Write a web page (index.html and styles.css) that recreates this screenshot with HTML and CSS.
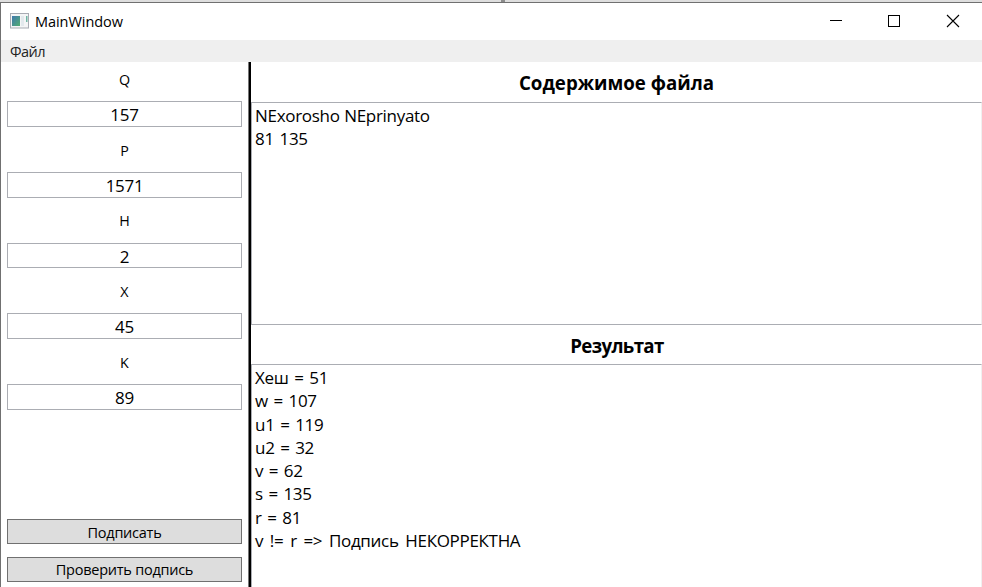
FILE: index.html
```html
<!DOCTYPE html>
<html lang="ru">
<head>
<meta charset="utf-8">
<title>MainWindow</title>
<link rel="stylesheet" href="styles.css">
</head>
<body>
<div class="desktop"><span class="seam"></span></div>
<div class="window">
  <header class="titlebar">
    <svg class="app-icon" width="19" height="16" viewBox="0 0 19 16">
      <defs>
        <linearGradient id="pane" x1="0" y1="0" x2="1" y2="1">
          <stop offset="0" stop-color="#3f78ad"/>
          <stop offset="1" stop-color="#52ad72"/>
        </linearGradient>
      </defs>
      <rect x=".5" y=".5" width="18" height="14.5" fill="#f4f5f6" stroke="#a8abb3"/>
      <rect x="2" y="3" width="8" height="10" fill="url(#pane)"/>
      <rect x="11" y="3" width="3" height="10" fill="#e3e9ed"/>
      <rect x="16" y="3" width="1.5" height="6" fill="#6fb5a4"/>
    </svg>
    <h1 class="title">MainWindow</h1>
    <svg class="controls" width="135" height="14" viewBox="0 0 135 14" fill="none" stroke="#000">
      <path d="M3 6.5h12" shape-rendering="crispEdges"/>
      <rect x="61.5" y="1.5" width="11" height="11" shape-rendering="crispEdges"/>
      <path d="M120 1l12 12M132 1l-12 12" stroke-width="1.1"/>
    </svg>
  </header>
  <nav class="menubar">Файл</nav>
  <main class="content">
    <section class="sidebar">
      <div class="fields">
        <label class="field"><span class="name">Q</span><span class="box">157</span></label>
        <label class="field"><span class="name">P</span><span class="box">1571</span></label>
        <label class="field short"><span class="name">H</span><span class="box">2</span></label>
        <label class="field"><span class="name">X</span><span class="box">45</span></label>
        <label class="field"><span class="name">K</span><span class="box">89</span></label>
      </div>
      <div class="actions">
        <button class="sign">Подписать</button>
        <button class="verify">Проверить подпись</button>
      </div>
    </section>
    <section class="output">
      <h2 class="heading">Содержимое файла</h2>
      <div class="text source"><p class="latin">NExorosho NEprinyato</p><p>81 135</p></div>
      <h2 class="heading result-heading">Результат</h2>
      <div class="text result">
        <p>Хеш = 51</p>
        <p>w = 107</p>
        <p>u1 = 119</p>
        <p>u2 = 32</p>
        <p>v = 62</p>
        <p>s = 135</p>
        <p>r = 81</p>
        <p class="verdict">v != r =&gt; Подпись НЕКОРРЕКТНА</p>
      </div>
    </section>
  </main>
</div>
</body>
</html>
```
FILE: styles.css
```css
* { box-sizing: border-box; margin: 0; padding: 0; }
body {
  width: 982px; height: 587px; overflow: hidden; background: #fff; color: #000;
  font-family: "Open Sans", "Noto Sans", sans-serif; font-size: 14.5px;
}
.desktop { height: 2px; background: #dedede; }
.seam { display: block; width: 4px; height: 2px; margin-left: 501px; background: #8c8c8c; }
.window { height: 585px; display: flex; flex-direction: column; border-top: 1px solid #707070; border-left: 1px solid #707070; }
.titlebar { height: 37px; flex: none; display: flex; align-items: center; padding: 0 20px 0 9px; }
.app-icon { margin-top: -2px; }
.title { margin-left: 6px; font-size: 14.5px; font-weight: 400; letter-spacing: -.05px; }
.controls { margin: -1px 0 0 auto; }
.menubar { height: 22px; flex: none; padding-left: 9px; background: #efefef; line-height: 23px; color: #222; font-size: 14.5px; letter-spacing: -.5px; }
.content { flex: 1; display: flex; min-height: 0; }
.sidebar { width: 250px; flex: none; display: flex; flex-direction: column; justify-content: space-between; padding: 0 7px 5px 6px; border-right: 2px solid #000; box-shadow: inset -1px 0 #777; }
.field { display: flex; flex-direction: column; height: 70.75px; text-align: center; }
.name { height: 39px; line-height: 35px; font-size: 14.3px; }
.short .name { line-height: 34px; }
.box { height: 26px; border: 1px solid #abadb3; line-height: 26px; font-size: 17px; letter-spacing: -.3px; }
.short .box { height: 25px; }
.actions { display: flex; flex-direction: column; gap: 13px; }
button { height: 25px; border: 1px solid #707070; background: #ddd; color: #000; font: 14.5px/24px "Open Sans", "Noto Sans", sans-serif; letter-spacing: -.25px; padding-top: 1px; }
.verify { padding-top: 0; }
.output { flex: 1; display: flex; flex-direction: column; min-width: 0; }
.heading { height: 40px; flex: none; text-align: center; font-size: 18.7px; line-height: 42px; font-weight: 700; letter-spacing: 0; }
.result-heading { height: 39px; letter-spacing: -.65px; padding-left: 1px; }
.text { border: 1px solid #abadb3; border-right: 1px solid #f0f0f0; padding: 1px 3px; font-size: 17px; line-height: 23.3px; letter-spacing: -.3px; word-spacing: 1.5px; white-space: nowrap; }
.latin { word-spacing: 0.5px; }
.verdict { word-spacing: 2.6px; letter-spacing: -.32px; }
.source { height: 223px; }
.result { flex: 1; border-bottom: 0; }
```
